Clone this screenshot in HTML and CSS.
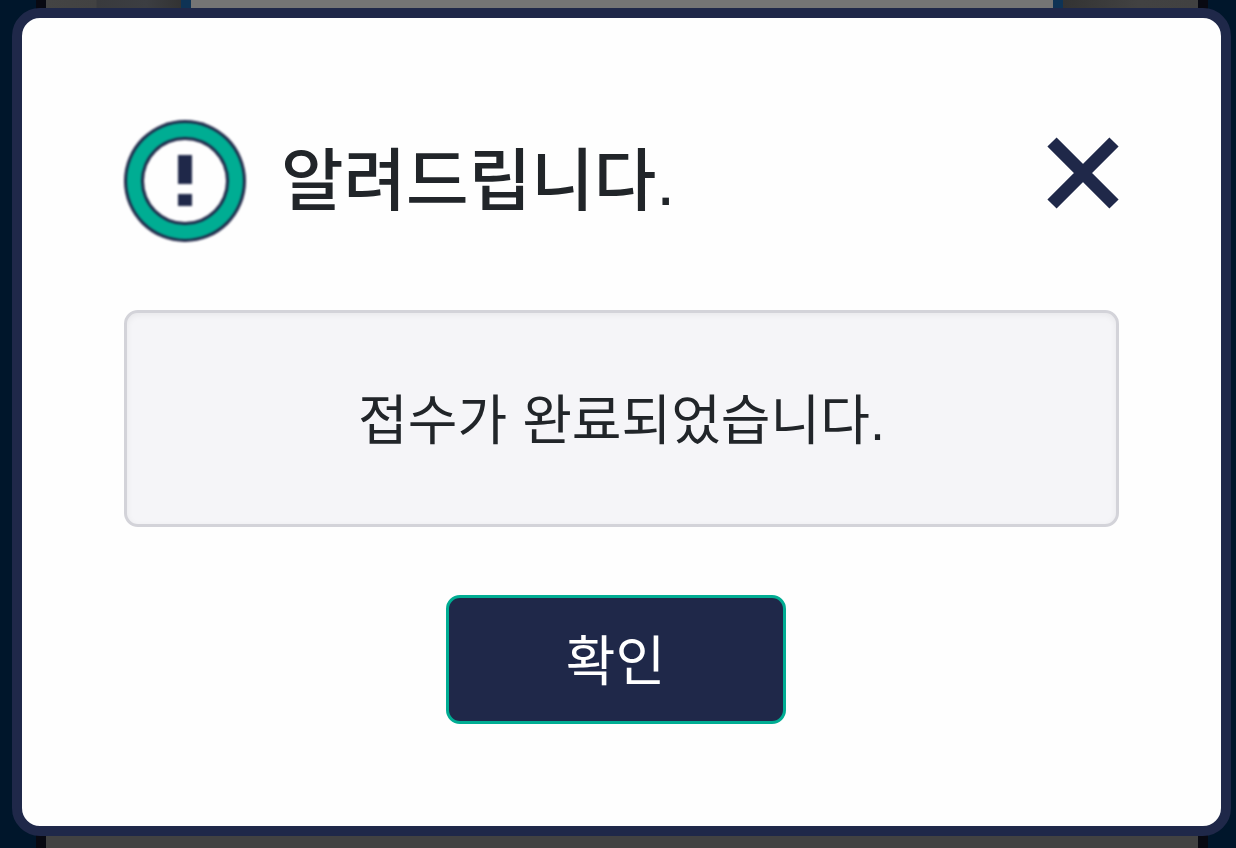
FILE: index.html
```html
<!DOCTYPE html>
<html lang="ko">
<head>
<meta charset="utf-8">
<meta name="viewport" content="width=device-width, initial-scale=1">
<title>알려드립니다.</title>
<link rel="stylesheet" href="styles.css">
</head>
<body>
<div class="backdrop" aria-hidden="true">
  <div class="backdrop-page">
    <div class="backdrop-panel"></div>
  </div>
</div>
<main class="overlay">
  <section class="modal" role="dialog" aria-modal="true" aria-labelledby="modal-title" aria-describedby="modal-message">
    <header class="modal-header">
      <svg class="notice-icon" viewBox="0 0 122 122" aria-hidden="true">
        <circle cx="61" cy="61" r="61" fill="#1f2849"/>
        <circle cx="61" cy="61" r="58" fill="#00ad93"/>
        <circle cx="61" cy="61" r="44" fill="#1f2849"/>
        <circle cx="61" cy="61" r="41" fill="#fefefe"/>
        <path d="M54 35h14v29H54zM54 74h14v12H54z" fill="#1f2849"/>
      </svg>
      <h1 class="modal-title" id="modal-title">알려드립니다.</h1>
      <button class="close-button" type="button" aria-label="닫기">
        <svg class="close-icon" viewBox="0 0 72 72" aria-hidden="true">
          <path d="M5 5l62 62M67 5L5 67" fill="none" stroke="#1f2849" stroke-width="13"/>
        </svg>
      </button>
    </header>
    <p class="message" id="modal-message">접수가 완료되었습니다.</p>
    <button class="confirm-button" type="button">확인</button>
  </section>
</main>
</body>
</html>
```

FILE: styles.css
```css
* {
  box-sizing: border-box;
}

body {
  margin: 0;
  color: #212529;
  background: #00162b;
  font-family: "Liberation Sans", "Noto Sans CJK KR", sans-serif;
}

.backdrop {
  position: fixed;
  inset: 0;
  padding: 0 28px 0 36px;
}

.backdrop-page {
  height: 100%;
  border: solid #080912;
  border-width: 0 10px;
  background: #424242;
}

.backdrop-panel {
  height: 50%;
  padding: 0 135px;
  background: linear-gradient(90deg, #444 0, #424242 50px, #393a3d 51px, #3c3e42 100px, #333 135px, #333 calc(100% - 135px), #424242 calc(100% - 60px), #414141 100%);
}

.backdrop-panel::before {
  content: "";
  display: block;
  height: 100%;
  border: solid #0e3355;
  border-width: 0 10px;
  background: #757575;
}

.overlay {
  position: relative;
  padding: 8px 5px 12px 12px;
}

.modal {
  display: flex;
  flex-direction: column;
  align-items: center;
  padding: 102px;
  border: 10px solid #1f2849;
  border-radius: 28px;
  background: #fefefe;
}

.modal-header {
  display: flex;
  align-items: center;
  align-self: stretch;
  margin-bottom: 68px;
}

.notice-icon {
  flex: none;
  width: 122px;
  height: 122px;
  overflow: visible;
  filter: blur(1px);
}

.modal-title {
  flex: 1;
  margin: 0 0 0 35px;
  font-size: 68px;
  font-weight: 500;
  line-height: 100px;
}

.close-button {
  padding: 0;
  margin-bottom: 16px;
  border: 0;
  background: none;
  cursor: pointer;
}

.close-icon {
  display: block;
  width: 72px;
  height: 72px;
}

.message {
  align-self: stretch;
  margin: 0 0 68px;
  padding: 68px 20px 63px;
  border: 3px solid #d3d3d9;
  border-radius: 14px;
  background: #f5f5f8;
  box-shadow: inset 0 2px 6px rgb(0 0 0 / 6%);
  font-size: 54px;
  line-height: 80px;
  text-align: center;
}

.confirm-button {
  min-width: 340px;
  margin-right: 12px;
  padding: 24px 20px 19px;
  border: 3px solid #00ad93;
  border-radius: 14px;
  color: #fff;
  background: #1f2849;
  font-family: inherit;
  font-size: 54px;
  line-height: 80px;
  cursor: pointer;
}
```
